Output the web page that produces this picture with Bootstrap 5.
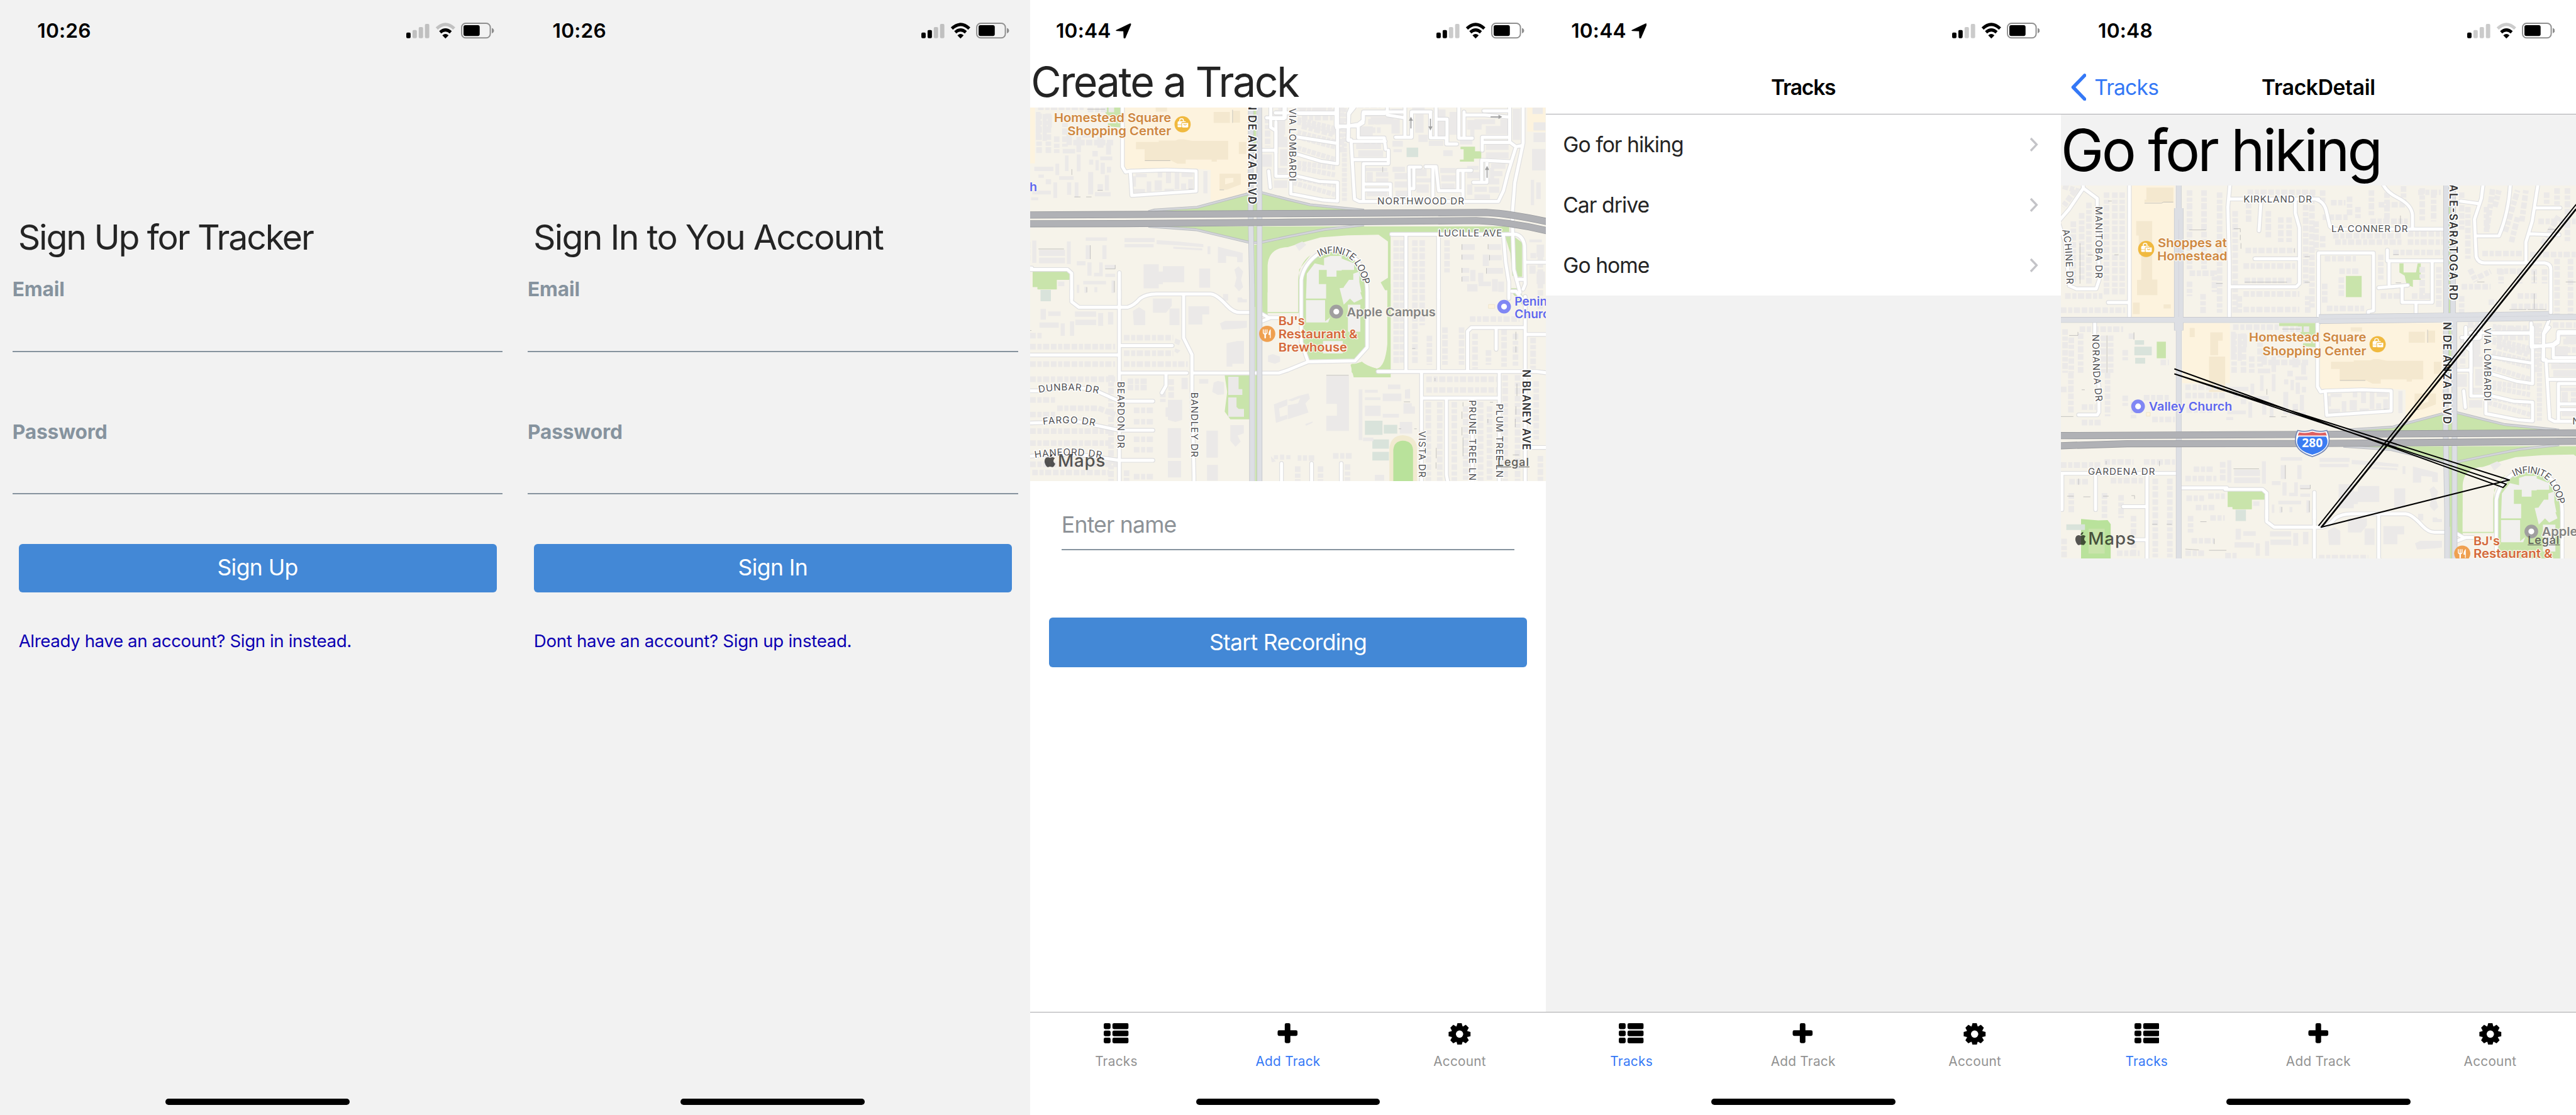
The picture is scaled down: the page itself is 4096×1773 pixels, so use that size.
<!DOCTYPE html>
<html lang="en">
<head>
<meta charset="utf-8">
<title>Tracker</title>
<link href="https://cdn.jsdelivr.net/npm/bootstrap@5.3.0/dist/css/bootstrap.min.css" rel="stylesheet">
<style>
html,body{margin:0;background:#f2f2f2;overflow:hidden}
.board{width:4140px;height:1792px;zoom:.98937;font-family:Inter,"Liberation Sans",sans-serif;color:#242424}
.phone{width:828px;height:1792px;background:#f2f2f2;overflow:hidden;flex:none}
.phone.plain{background:#fff}
.statusbar{height:99px;padding:0 34px 0 60px;flex:none}
.statusbar.loc{padding-left:41px}
.clock{font-size:32px;font-weight:600;line-height:40px;letter-spacing:.007em;color:#000}
.statusbar .arrow{margin-left:8px;width:25px;height:25px}
.signals{width:141px;height:26px}
.dim{fill:#000;opacity:.2}
.auth-title{font-size:56px;line-height:68px;font-weight:400;margin:248px 0 0 29px;letter-spacing:-.038em}
.auth-title.in{letter-spacing:-.031em}
.field{margin:30px 20px 0}
.field+.field{margin-top:108px}
.field label{display:block;font-size:32px;line-height:40px;font-weight:700;color:#86939e;height:40px;letter-spacing:-.004em}
.field input,.name-in{background:transparent;border:0;border-bottom:2.100px solid #86939e;border-radius:0;padding:0}
.field input{height:81px}
.cta{background:#4388d6!important;border:0;border-radius:6px;color:#fff!important;font-size:36px;line-height:44px;height:78px;margin:0 30px;letter-spacing:-.021em;font-weight:400}
.auth-cta{margin-top:79px;letter-spacing:-.017em}
.swap{font-size:28px;line-height:40px;margin:59px 30px 0 30px;color:#0c00b2;text-decoration:none;letter-spacing:-.0145em}
.swap.in{letter-spacing:-.0115em}
.pill{width:296px;height:10px;border-radius:5px;background:#000}
.auth-pill{margin-bottom:16px}
.create{font-size:67px;line-height:66px;height:74px;letter-spacing:-.036em;font-weight:400;margin:0;padding-left:1px}
.mapbox{height:600px;width:828px;flex:none;overflow:hidden}
.mapbox svg.tiles{width:828px;height:600px;display:block}
.brand{left:21px;top:552px;color:#000;opacity:.65;font-size:28px;line-height:32px;font-weight:500;letter-spacing:.03em}
.brand svg{width:21px;height:25px;margin-right:2px;margin-top:-1px}
.legal{right:26px;top:558px;font-size:18px;line-height:24px;font-weight:500;letter-spacing:.054em;color:#5d5d58;text-decoration:underline}
.name-in{height:78px;margin:33px 50px 0;width:728px;font-size:36px;letter-spacing:-.023em}
.name-in::placeholder{color:#8d9297;opacity:1}
.rec{margin-top:109px;height:79px}
.topbar{height:85px;background:#fff;border-bottom:1.100px solid #a9a9ad;font-size:34px;line-height:42px;flex:none;padding-bottom:2px}
.topbar h2{font-size:34px;font-weight:600;margin:0;line-height:42px;color:#000;letter-spacing:-.037em}
.topbar h2.det{letter-spacing:-.0107em}
.topbar .side{width:300px;padding-left:15px;color:#3478f6;letter-spacing:-.0235em}
.side svg{width:26px;height:44px;margin-right:13px}
.rows .list-group-item{height:97px;border:0;padding:0 36px 0 28px;font-size:34px;color:#242424;letter-spacing:-.028em;background:#fff}
.rows svg{width:14px;height:24px}
.detail-title{font-size:93px;line-height:112px;height:114px;letter-spacing:-.0405em;font-weight:400;color:#000;margin:0;padding-top:2px;flex:none}
.tabs{height:166px;border-top:1.100px solid #a7a7aa;background:#fff;padding-top:16px;flex:none;color:#929292}
.tabs .nav-link{padding:0;width:276px;font-size:21px;line-height:26px;letter-spacing:.013em;color:#929292}
.tabs .nav-link.active{color:#3478f6}
.tabs .nav-link svg{width:40px;height:36px;margin-bottom:14px;fill:#000;color:#000}
.tabs .pill{margin-top:47px}
/* map drawing */
.st{font-family:Inter,sans-serif;font-size:46px;fill:#505052;stroke:#fff;stroke-width:9;paint-order:stroke;stroke-linejoin:round}
.av{font-family:Inter,sans-serif;font-size:51px;font-weight:600;fill:#333;stroke:#fff;stroke-width:10;paint-order:stroke;stroke-linejoin:round}
.poi{font-family:Inter,sans-serif;font-size:58px;font-weight:600;stroke:#fbf8f0;stroke-width:7;paint-order:stroke;stroke-linejoin:round}
.bl{fill:#ebe9e8}.bc{fill:#f4e8cf}.gr{fill:#c9e4ab}.ten{fill:#d9e3db}.com{fill:#fdf3de}.cream{fill:#f6f3ea}
.hr{fill:none;stroke:#ebe9e8;stroke-width:27;stroke-dasharray:27 8 20 7 30 8}
.hs{fill:none;stroke:#ebe9e8;stroke-width:24;stroke-dasharray:17 5 21 5}
.sh{fill:none;stroke:#aaa;stroke-width:2}
.ar{fill:none;stroke:#a0a0a0;stroke-width:5}
</style>
</head>
<body>
<svg width="0" height="0" class="position-absolute">
<defs>
<symbol id="i-bat" viewBox="0 0 54 26"><rect x="1" y="1" width="46" height="23.500" rx="6.500" fill="none" stroke="#8e8e8e" stroke-width="2"/><rect x="4" y="4" width="26" height="17.500" rx="3"/><path d="M49.500 8.500q3.500 1.500 3.500 4.300t-3.500 4.300z" fill="#8e8e8e"/></symbol>
<symbol id="i-arrow" viewBox="0 0 24 24"><path d="M1.200 10.200 21.500.6q3-1 2.200 1.800L15 22.800q-1.700 2.400-2.800-.4L11.800 12.400 1.800 12Q-1.200 11.200 1.200 10.200z"/></symbol>
<symbol id="i-list" viewBox="0 0 40 36"><rect x="0" y="1" width="11" height="9.500" rx="2.500"/><rect x="14" y="1" width="26" height="9.500" rx="2.500"/><rect x="0" y="12.800" width="11" height="9.200" rx="2.500"/><rect x="14" y="12.800" width="26" height="9.200" rx="2.500"/><rect x="0" y="24.200" width="11" height="9.200" rx="2.500"/><rect x="14" y="24.200" width="26" height="9.200" rx="2.500"/></symbol>
<symbol id="i-plus" viewBox="0 0 40 36"><rect x="15" y="1" width="9" height="32" rx="2.500"/><rect x="3.500" y="12.500" width="32" height="9" rx="2.500"/></symbol>
<symbol id="i-gear" viewBox="0 0 40 36"><g transform="translate(20 18.500)"><circle r="9.700" fill="none" stroke="#000" stroke-width="7.600"/><g id="tooth2"><path id="tooth" d="M-4.800-12.500-3.400-17.600H3.400L4.800-12.500z"/><use href="#tooth" transform="rotate(45)"/><use href="#tooth" transform="rotate(90)"/><use href="#tooth" transform="rotate(135)"/></g><use href="#tooth2" transform="rotate(180)"/></g></symbol>
<symbol id="i-chev" viewBox="0 0 14 24"><path d="M2 2 11.500 12 2 22" fill="none" stroke="#c4c4c8" stroke-width="3.400"/></symbol>
<symbol id="i-apple" viewBox="0 0 16 16"><path d="M11.182.008C11.148-.03 9.923.023 8.857 1.18c-1.066 1.156-.902 2.482-.878 2.516s1.52.087 2.475-1.258.762-2.391.728-2.43m3.314 11.733c-.048-.096-2.325-1.234-2.113-3.422s1.675-2.789 1.698-2.854-.597-.79-1.254-1.157a3.7 3.7 0 0 0-1.563-.434c-.108-.003-.483-.095-1.254.116-.508.139-1.653.589-1.968.607-.316.018-1.256-.522-2.267-.665-.647-.125-1.333.131-1.824.328-.49.196-1.422.754-2.074 2.237-.652 1.482-.311 3.83-.067 4.56s.625 1.924 1.273 2.796c.576.984 1.34 1.667 1.659 1.899s1.219.386 1.843.067c.502-.308 1.408-.485 1.766-.472.357.013 1.061.154 1.782.539.571.197 1.111.115 1.652-.105.541-.221 1.324-1.059 2.238-2.758q.52-1.185.473-1.282"/></symbol>
<g id="bag"><circle r="39" fill="#f0b93f"/><path d="M-14-15v-4q0-8 9-8t9 8v4" fill="none" stroke="#fff" stroke-width="4.500"/><path d="M-24-9q0-6 6-6H10q6 0 6 4H0q-6 0-6 6v7H-24zM-24 4H-6V14H-20q-4 0-4-4z" fill="#fff"/><path d="M-3-7H27V11q0 4-4 4H1q-4 0-4-4z" fill="#fff"/><path d="M5-1q7 9 14 0" fill="none" stroke="#f0b93f" stroke-width="4"/></g>

<!-- local streets; drawn twice, casing below and fill above -->
<g id="streets" fill="none" stroke-linejoin="round" stroke-linecap="round">
<g transform="translate(0 -39)"><path d="M445 10V325L460 350 480 346 660 340 800 345V442L490 463 483 350M1160 39V135L1185 150V370H1242M1110 245H1185M1150 345 1158 425M1160 92H1224V39M0 820H180L200 838V960M430 835V960"/></g>
<g transform="translate(1242 -39)"><path d="M-60 65H235M240 39V310L160 298 40 262M40 180 240 212M45 370 150 395 240 400V490L170 485 15 455V380M235 135 290 128 340 120 365 100V60H560M320 39 295 70 290 195H305L322 480 345 492H1015L1040 440 1060 360 1100 230M1070 39V205L1100 228 1130 222M1135 39V210L1095 400 1082 560 1085 650 1090 820 1120 930M340 125V185H465L472 240M310 202H470M485 245V310H365V490M320 290H485M365 408H495V480M370 436H495M480 39V75L560 88M565 39V182M597 60V182H520M600 60H690M688 60V185H765V215H815M715 39V185M715 95H768V215M825 39V187H890M850 60V187M850 75H950L1070 85M945 55H1070M938 245V182H1070M940 207H1070M640 326H585L588 480M608 330V430H590M665 324H715L728 440H845V480M700 330V480M885 342H820V440M845 342V440M895 400H960V300M935 295V400M935 293 1070 300M500 650H1100Q1135 660 1142 705L1145 890 1135 915M570 650V960M727 650V960M1040 655 1050 780 1066 880V960M1145 785H1260M1110 868H1145"/></g>
<g transform="translate(0 891)"><path d="M200-10V45L235 72H470Q500 65 530 30 560 8 610 8H870Q900 10 950 65 980 97 1010 97H1060M430-10V930M740 8V220L780 300V470L790 890V930M0 302H430M430 257H685M430 389H755M655 389V450L635 485M785 389H1200L1242 375M0 475H40Q230 440 330 480L430 525H592M0 630 60 628Q220 610 310 640L430 665H592M0 790Q200 770 340 797L430 810H592M1212 825V930M1115 103 1150 122H1200M1115 140 1160 122"/></g>
<g transform="translate(1242 891)"><path d="M0 375 98 335 65 240V-60Q75-130 140-180 240-240 335-155 383-90 383 0V265L325 330 98 335M435 382H1200L1260 390M570 0V382M727 0V382M867 382V188L885 170H1145M1005 175V275M1145 20V930M1080-5H1100L1145 50M1150 203H1260M645 382V930M645 510H1020M1020 382V930M765 515V880L775 930M890 515V930M1150 748H1260M115 825V930M258 825V930"/></g>
<g transform="translate(-792 -711)"><path d="M105 0 108 40 40 140-20 210M108 40 175 90V130L185 480 170 525H75L40 510 20 300-10 210M330 0V662M228 591H330M817 0 805 130 812 400V662M815 92H1242M965 100 955 245M1130 95V160L1150 230V500L1135 515H812M935 380H1150M163 690V930"/></g>
<g transform="translate(450 -711)"><path d="M-10 95Q30 105 40 160L55 225Q70 240 100 237H610M310 20Q330 60 380 85 450 120 453 170V237M0 690V352H265V630L240 635V650M332 338V390H610M340 390V505M290 520 430 508M403 515V590H548V390M470 595V650M795 10 785 90 752 190 760 370Q770 400 800 400H1090Q1120 405 1120 430V640M685 102 775 115M925 10Q920 150 870 270H755M1060 10 1030 200 1000 300V395M1045 135H1165M1015 260 1160 265M1025 690V800M845 740H1020M780 690V760H690M735 780V930M1110 680 1085 740V870M1025 800H1130L1155 785V740H1260"/></g>
<g transform="translate(-792 219)"><path d="M163-10 183 60V190L175 203H85M0 485H560M5 485V660M167 490V660M415 485V930M300 645H415M350 805H415M580 555H800"/></g>
</g>

<g id="ramps" fill="none" stroke-linejoin="round"><path transform="translate(0 -39)" d="M570 541 600 533 805 520 1050 455M1110 448 1242 482 1350 508 1610 534M570 612 800 628 1060 690H1110L1242 662 1420 627 1610 605"/></g>
<g id="avenues" fill="none" stroke-linejoin="round">
<path d="M1065-711V-40M1098-711V-40" stroke-width="22"/>
<path d="M1065-50 1063 500 1070 891V1830M1104-50 1106 500V1830" stroke-width="22"/>
<path d="M-792-36H450M1550-50H1800" stroke-width="24"/><path d="M452-40 1092-48 1560-55" stroke-width="42"/>
<path d="M-224-711V-560M-224 0V1830" stroke-width="24"/><path d="M-224-575V15" stroke-width="41"/>
</g>
<g id="freeway" fill="none" stroke-linejoin="round">
<path d="M-800 522 450 516 1242 511 2200 506Q2320 512 2500 552"/>
<path d="M-800 571-472 561 450 560 1242 553 2150 545Q2320 552 2500 596"/>
</g>

<g id="city">
<rect x="-800" y="-720" width="3300" height="2560" class="cream"/>
<!-- commercial blocks -->
<path class="com" d="M455 0H1050V416L870 451V301L800 296H455ZM2397 0h87v116h-87zM-452-684h208v635h-208zM-207-21H23V269H-207zM455-21h595v40h-595zM0 0h22v265H0z"/>
<!-- parks -->
<path class="gr" transform="translate(0 -39)" d="M365 39H445V75L375 62zM375 115H440V135L375 130zM570 538 805 520 1050 455H1115L1242 485 1350 510 1610 535zM570 612H2310V650H1738V940H1118V690H1050L800 628zM12 828H190V870H128V915H35V905H12zM2075 228H2145V250H2175V285H2140V300H2072V290H2090V240H2075zM2290 660 2325 655 2372 690V855H2345L2325 850 2315 740zM1080 700h16v300h-16z"/>
<path class="gr" transform="translate(0 891)" d="M1118-40H1738V410H1560L1545 350 1600 300 1120 100zM1085 0h12v930h-12zM938 400H1058V612H965L938 575 950 480zM2305-20h45l40 60v40z"/>
<path class="cream" transform="translate(0 -39)" d="M1145 860V800Q1150 715 1242 712L1330 685 1400 665 1530 655 1680 652 1725 685V860L1690 882 1720 935V1050L1330 1050 1145 1025V890z"/>
<path class="cream" transform="translate(1242 891)" d="M-97 0H400V-10H480V250Q470 360 430 368 380 355 358 335L330 345 98 345 0 380-120 390V110H-97z"/>
<path class="gr" transform="translate(1242 891)" d="M-97 95H50V-60Q55-140 110-180L55-110V100H-97zM98 325 70 240V-60Q80-130 140-175 240-235 325-150 376-90 376 0V265L325 322z"/>
<path class="gr" transform="translate(1242 891)" d="M358 335Q370 355 430 368 470 365 484 250V-10H496V410H330L308 385V350z"/>
<path class="gr" transform="translate(450 -711)" d="M132 463h76v102h-76zM390 402h20v44h60l8-44h15v80h-38v34l-30-10-10-45-25-15zM-190 690H-15V740L-30 790-85 740-100 705H-190zM628 110h12v540h-12zM625 700h14v230h-14z"/>
<path class="gr" transform="translate(-792 -711)" d="M462 780h44v80h-44z"/>
<path fill="#b9e29b" transform="translate(-792 219)" d="M97 705 180 712 225 710 240 730V930H97z"/>
<path class="gr" transform="translate(-792 219)" d="M133 752h78v120h-78z"/>
<path class="gr" transform="translate(-792 219)" d="M806 570H985V610H920V658H830V645H806z"/>
<path fill="#f1ead0" d="M1732 1840V1640Q1740 1582 1797 1580 1860 1585 1865 1640V1840z"/><path fill="#b9e29b" d="M1751 1840V1650Q1755 1608 1797 1606 1843 1608 1846 1650V1840z"/>
<!-- courts -->
<path class="ten" d="M50 879h50v55H50zM1815 193h56v46h-56zM1614 1510h85v68h-85zM1705 1530h65v42h-65zM1650 1600h80v45h-80zM1650 1660h80v42h-80zM-436 62h45v22h-45zM-438 93h84v42h-84zM-434 147h48v28h-48zM-766 950h90v27h-90z"/>
<path fill="#fdf3de" stroke="#e9dfc0" stroke-width="2" d="M2210 950h30v18h-30zM-380 410h18v18h-18z"/>
<!-- shops -->
<path class="bc" transform="translate(0 -39)" d="M510 205H620V198H700L715 192H740L780 200H955V290H900V300H875V290H750V310H710L680 295H552V240H510ZM885 60h78v53h-78zM978 55h34v57h-34zM1006 205h36v58h-36zM913 358H1016V410L950 435H913V358M940 380V410L980 398V378zM605 39h55v20h-55z" fill-rule="evenodd"/>
<path class="bc" transform="translate(-792 -711)" d="M412 37H542V107H403V95H412zM363 198H440V480H465V555H367V482H387V360H375V268H363zM347 592h33v55h-33zM495 600h35v20h-35zM621 714h24v44h-24zM720 735h60v40h-22v70h-38zM714 852h78v170h-78z"/>
<!-- larger buildings -->
<path class="bl" transform="translate(0 -39)" d="M547 795h73v35h20v-26h103v77h-103v10h-20v20h-73zM815 815h53v93h-53zM905 710 1025 740V785H998V760L945 755V788H905zM985 820l20-15 22 25-10 40 10 35-20 20-22-25 10-40zM455 668h145v20H455zM610 678l110 8 115 12v14l-115-8-110-6zM455 697h140v16H455zM690 710l140 8v10l-140-8zM835 345h20v108h-20zM855 708h14v38h-14zM43 725H168V755H43zM43 763H168V790H43zM10 680h20v108H10zM177 685h19v108h-19zM268 665h103v17H268zM268 703h22v67h-22zM348 703h20v67h-20zM225 780h42v20h-42zM276 786h20v64h-20zM333 786h17v64h-17zM360 798h50v18h-50zM308 836h42v17h-42zM362 840h48v16h-48zM135 878h30v22h-30zM256 875h110v17H256zM225 893h12v40h-12zM262 903h12v30h-12zM310 905h14v25h-14zM392 873h15v60h-15zM28 60h22v135H28zM60 70h20v130H60zM85 75h20v60H85zM175 150h26v70h-26zM157 238h60v22h-60zM223 180h22v74h-22zM168 270h17v75h-17zM225 265h18v82h-18zM122 310h18v55h-18zM20 325h92v20H20zM250 160h42v24h-42zM300 248h26v27h-26zM324 182h30v50h-30zM366 210h24v56h-24zM284 290h20v24h-20zM315 292h16v50h-16zM338 275h58v18h-58zM340 305h20v55h-20zM370 325h20v28h-20zM112 400h18v75h-18zM140 370h70v18h-70zM178 400h20v60h-20zM215 400h18v72h-18zM280 350h24v108h-24zM325 408h26v32h-26zM360 365h20v75h-20zM312 447h76v20h-76zM10 440h90v18H10zM5 472h34v14H5zM75 385h26v24H75zM40 362h26v16H40z"/>
<path class="bl" transform="translate(0 -39)" d="M498 432h56v26h-56zM508 358h54v17h-54zM562 395h22v50h-22zM615 350h22v26h-22zM600 390h35v50h-35zM655 350h24v54h-24zM648 430h45v16h-45zM697 348h22v85h-22zM730 352h55v22h-55zM762 385h24v48h-24zM490 370h20v50h-20zM728 405h24v28h-24zM1180 50h50v30h-50zM1190 100h40v70h-40zM1195 180h45v50h-45zM1120 265h45v60h-45zM1205 240h35v80h-35zM1178 330h60v25h-60zM1175 390h65v36h-65z"/>
<path class="bl" transform="translate(1242 -39)" d="M350 130h60v45h-60zM400 85h110v35H400zM500 45h50v30h-50zM500 95h40v70h-40zM615 70h40v90h-40zM630 170h45v35h-45zM723 48h38v40h-38zM723 105h38v72h-38zM780 60h40v110h-40zM865 100h70v45h-70zM900 95h100v24H900zM1025 95h38v70h-38zM880 125h20v60h-20zM955 128h105v40H955zM830 195h60v22h-60zM680 200h70v24h-70zM330 215h120v24H330zM340 245h120v32H340zM505 200h50v28h-50zM510 240h40v14h-40zM370 330h110v16H370zM380 350h30v50h-30zM425 350h60v22h-60zM425 380h60v20h-60zM505 325h60v24h-60zM515 355h60v30h-60zM515 395h60v30h-60zM520 440h60v30h-60zM620 335h50v35h-50zM620 380h70v20h-70zM620 410h60v40h-60zM735 330h75v25h-75zM740 365h70v30h-70zM740 405h65v30h-65zM865 350h60v30h-60zM865 320h55v20h-55zM865 410h25v50h-25zM900 420h60v25h-60zM980 310h70v25h-70zM975 345h60v25h-60zM970 380h50v30h-50zM970 420h50v30h-50zM900 458h75v22h-75zM380 445h100v22H380zM955 215h110v28H955zM955 255h110v30H955zM990 75h70v10h-70zM1085 45h36v150h-36zM975 330h20v60h-20zM370 70h100v14H370zM600 39h60v12h-60zM750 245h45v28h-45zM1180 40h50v30h-50zM1185 110h57v40h-57zM1185 160h57v46h-57zM1178 238h64v104h-64zM1172 388h16v122h-16zM1198 400h22v80h-22z"/>
<path class="bl" transform="translate(1242 -39)" d="M840 698h62v28h-62zM968 698h60v28h-60zM840 747h58v26h-58zM972 750h60v26h-60zM940 748h30v55h-30zM958 812h80v28h-80zM840 812h35v24h-35zM880 822h25v55h-25zM918 836h25v42h-25zM840 852h34v26h-34zM920 878h60v22h-60zM985 866h28v60h-28zM865 890h50v36h-50zM1015 878h28v50h-28zM1165 675h60v14h-60zM1200 700h36v60h-36zM1165 800h30v40h-30zM1200 830h40v60h-40zM35 700l35-15 20 15-35 30zM1170 740h28v26h-28z"/>
<path class="bl" transform="translate(0 891)" d="M592 30H683V65L655 98H592zM495 90 525 72 555 90V158H500zM672 78h48v80h-48zM763 67h100v40h-33v48h-67zM915 150 940 138H1045V170L1010 175 925 180zM947 245 1000 235H1031V345H975V358H947zM1147 305 1170 298 1205 310V335L1180 345 1147 335zM885 435 905 427 935 433V492L905 495 878 480zM815 418h44v22h-44zM664 518H733V615L700 625 664 615V600H653V555H664zM663 655H727V798H663zM850 667H905V797H850zM853 832H905V908H853zM664 813H728V893H664zM965 640H1030V680L1000 690 1015 720 990 745 965 715zM955 407h50v60h18v28h-68zM955 507h40v45l10 10h26v38h-76zM1175 540 1240 515V545L1200 560 1205 600 1240 590V610L1185 630zM930 8h25v32h-25zM1000 25h20l5 8h20v15h-45zM87 92h60v22H87zM50 80h26v52H50zM45 145h93v26H45zM147 150h20v60h-20zM216 92h102v26H216zM218 132h100v26H218zM328 100h24v62h-24zM375 95h26v60h-26zM192 140h20v70h-20zM700 222 725 232 718 255 695 245zM700 270 725 280 710 295 695 285zM730 412h30v55h-30zM1160 790l25 25-20 5zM1175 785h20v20h-20zM1205 782h20v25h-20zM1235 785h20v20h-20z"/>
<path class="bl" transform="translate(1242 891)" d="M186 402H295V668H186V595H237V538H186zM0 545 50 535 60 510 20 525 0 520 50 500 100 487 107 512 85 535 100 580 0 612zM342 468h18v244h-18zM372 470h62v14h-62zM372 506h75v14h-75zM483 445h60v22h-60zM458 488h90v36h-90zM372 546h76v50h-76zM458 586h78v18h-78zM565 470l25-5V512H565zM558 535h40v15h15v35h-55zM540 625h60v56h-60zM363 700h50v18h-50zM420 880h45v28h-45zM85 635l35-12v6l-32 14z"/>
<!-- campus buildings -->
<path fill="#f1f0ee" transform="translate(1242 -39)" d="M175 765 205 755H260V825H235V855H188V822H175zM255 765 320 790V822H255zM92 840 130 790 175 800V822H150V890H185V960H88zM316 840 345 830V880L355 930H270V905L295 870H316z"/>
<path fill="#f1f0ee" transform="translate(1242 891)" d="M88 38H180V140L205 120 195 145H88zM290 60H350V190H290zM250-20 340-30 360 30 320 50 300 30 270 60zM170 235h95v60h-95z"/>
<!-- house rows -->
<path class="hs" d="M1290 57 1472 102M1290 120 1470 165M1290 142 1470 190M1290 195 1470 250M1290 268 1470 290M1290 290 1470 325M1270 335 1470 375M1270 363 1470 420M1290 -5 1470 20M1290 70 1470 120M1515-20V450M1490-20V80"/>
<path class="hr" d="M1765 640V1240M1855 640V1240M1925 1100V1240M2010 640V800M2000 1060V1240M2080 1060V1240M2145 1090V1260M2210 1170V1240M2285 1070V1250M2340 1090V1250M2425 1110V1260M2460 680V1000M2440 1320V1600M2460 1680V1800M1910 1310H2250M1910 1362H2250M1920 1420V1800M1975 1420V1800M2045 1420V1800M2100 1440V1800M2172 1420V1800M2215 1440V1800M2290 1290V1800M2350 1290V1800M1890 640V1050M1795 640V1230M2120 1020H2360M1370 1690H1290M1290 1730V1800M1400 1730V1800M1530 1720V1800M1460 1680H1550"/>
<path class="hr" d="M452 1110H690M452 1185H690M452 1237H760M470 1320H570M470 1350H570M500 1460H600M500 1515H600M500 1600H600M500 1650H600M465 1750V1800M500 1780H600M0 1153H410M0 1237H410M130 1310H410M0 1310H120M0 1410H120M130 1450H330L410 1480M0 1480H120M0 1560H400M0 1618H390M0 1720H420M10 1760H380M640 1370V1420M680 1310V1400M0 1100H60M390 1290V1800"/>
<path class="hr" transform="translate(-792 -711)" d="M10 30 70 50 10 130M60 200V500M135 110V500M100 160V480M220 60V560M260 60V560M295 60V560M20 560H200M0 628H310M620 50V430M690 50V430M765 60V640M620 450H740V540M620 490V560M685 550V650M840 150V640M900 60H1230M905 110V210M1000 150V280M1060 180V300M1100 180V300M1180 120V500M1210 60V620M890 340H1130M880 415H1130M885 485H1120M880 550H1150M880 625H1150M1190 640V560M1230 200V340M860 560V640M90 720H300M20 720V930M50 760V930M95 740V930M205 750V930M240 750V930M310 820V870M340 740V770M480 880H520M830 710H1050M835 740V930M880 740V930M920 850V930M960 750V900M1070 720H1200M1000 880H1200"/>
<path class="hr" transform="translate(450 -711)" d="M20 50V120M60 110H130M150 80V170M190 130V190M20 180H140M255 50V170M290 120H420M330 60V200M410 30V100M480 60H590M500 40V200M555 60V200M250 200H430M70 270H400M20 270V330M80 300H400M430 260H600M430 300H600M30 380H180M100 440H200M110 470V560M30 500V600M40 620H220M300 360V480M360 350H600M300 560H400M580 420V620M500 420V580M450 560H540M690 60V240M720 130V380M810 130V250L840 40M850 130 870 50M900 250 960 50M980 200 1000 50M930 300 960 180M1060 200H1240M1100 60V120M1150 40V120M1200 40V300M790 355H980M1020 360H1240M1080 310 1160 170M730 430 760 490M770 470 830 440M880 430V500M860 440H1000M970 430V500M1040 430V500M1090 430V500M690 515H830M930 610H1100M960 560H1060M820 590H860M690 560V640M1150 380V660M1215 380V660M850 715H1010M860 760H1010M1050 700V930M720 700H770M760 700V900M695 760V900M860 800 1010 840M1130 700H1240M1180 780H1240M1160 820H1240M1160 890H1240"/>
<path class="hr" transform="translate(-792 219)" d="M0 80H60M48 0V200M100 165H170M100 240H200M225 0V210M310 110V160M350 140V220M400 120H520M440 225H550M600 70H780M600 110H790M605 180H740M0 445H190M210 430H350M400 430H550M40 525H130M240 520H400M50 580V680M210 580V700M290 590V700M350 690V890M455 510V890M525 510V890M640 465H740M600 510H750M780 430V520M605 605H690M710 595H790M650 650H740M625 690V770M720 700H790M630 810H740M600 870H690M270 870H380M15 800V890"/>
<path class="sh" transform="translate(0 -39)" d="M553 295H676M325 438H350M275 47H362M290 703V770M410 798V817H362M913 436H935M765 433H787M273 905V930M406 875V930M2082 698V725M2082 748V772M2082 812V836M2082 855V878M2208 698V722M2215 750V776M2200 813V840M1700 325V350"/>
<path class="sh" transform="translate(1242 891)" d="M186 400H294M535 658H547M610 658H622M600 271H615M710 413V428M845 530V550M840 575V610M840 650V690M716 750V800M975 530H990M965 610V630M1105 440V500M1100 550V590M1097 610V650M1085 784H1115M845 700V790M715 820V850M1100 190V230M1100 260V290M560 528H590"/>
<path class="sh" transform="translate(-792 -711)" d="M403 112H485L495 107H542M618 241H700M228 102H245M833 235H865V252M865 265V290M868 305V332M886 493H1090M1125 330V350M92 305V500M40 750H82V733M352 735V770M222 750V930M748 499H780M130 362H155M258 361H278M1175 370H1200M1175 493H1200"/>
<path class="sh" transform="translate(-792 219)" d="M832 463H955M0 211H60M993 78V106M1005 212H1035M1062 212H1088M600 850 665 854M714 856H798M739 800V826M672 718H702M30 595H62M108 598H142M203 595H230M340 592H355V608M440 730H465M510 730H535M100 82H115M85 510V540M218 425V442M475 425V450"/>
<path class="sh" transform="translate(450 -711)" d="M526 722V785M1040 440V495M920 625H1002M1008 625H1098M1040 548V622M395 172V212M360 360H387M372 496H398M765 492H800M1105 238H1145M1192 492H1240"/>
<!-- roads -->
<use href="#streets" stroke="#dededf" stroke-width="22"/>
<use href="#streets" stroke="#fff" stroke-width="15"/>
<use href="#ramps" stroke="#b9bbbf" stroke-width="13"/><use href="#ramps" stroke="#d3d5d9" stroke-width="8"/>
<g stroke="#c3c5ca" fill="none"><path d="M1065-711V-60M1098-711V-60M1065-50 1063 500 1070 891V1830M1104-50 1106 500V1830M-224-711V-560M-224 0V1830" stroke-width="27"/><path d="M-792-36H450M1550-50H1800" stroke-width="28"/><path d="M452-40 1092-48 1560-55" stroke-width="46"/><path d="M-224-575V15" stroke-width="45"/></g>
<use href="#avenues" stroke="#dddfe4"/>
<path d="M460-40 1092-48 1560-55M-224-520V-50" stroke="#cfd1d7" stroke-width="2" fill="none"/>
<use href="#freeway" stroke="#97999d" stroke-width="34"/><use href="#freeway" stroke="#b0b1b5" stroke-width="29"/>
<g class="ar" transform="translate(1242 -39)"><path d="M594 140V95M688 93V140M978 84H1020M961 378V330M1018 84"/><path fill="#a0a0a0" stroke="none" d="M584 103 594 84 604 103zM678 130 688 150 698 130zM1016 74 1034 84 1016 94zM951 340 961 320 971 340z"/></g>

<!-- street names -->
<path id="p-loop" d="M1394 720C1450 688 1530 702 1568 756 1594 796 1608 842 1613 892" fill="none"/>
<path id="p-dun" d="M42 1375Q190 1350 330 1380" fill="none"/><path id="p-far" d="M63 1530Q190 1512 314 1536" fill="none"/><path id="p-han" d="M23 1690Q190 1664 347 1692" fill="none"/>
<path id="p-lac" d="M-786-470Q-768-400-765-206" fill="none"/><path id="p-nor" d="M-641 34-638 200-624 358" fill="none"/>
<g class="st">
<text x="1674" y="468" textLength="418">NORTHWOOD DR</text><text x="1967" y="621" textLength="308">LUCILLE AVE</text>
<text textLength="300"><textPath href="#p-loop">INFINITE LOOP</textPath></text>
<text textLength="288"><textPath href="#p-dun">DUNBAR DR</textPath></text><text textLength="250"><textPath href="#p-far">FARGO DR</textPath></text><text textLength="322"><textPath href="#p-han">HANFORD DR</textPath></text>
<text transform="translate(420 1321) rotate(90)" textLength="322">BEARDON DR</text><text transform="translate(775 1373) rotate(90)" textLength="313">BANDLEY DR</text>
<text transform="translate(1873 1559) rotate(90)" textLength="225">VISTA DR</text><text transform="translate(2118 1411) rotate(90)" textLength="388">PRUNE TREE LN</text><text transform="translate(2248 1428) rotate(90)" textLength="356">PLUM TREE LN</text>
<text transform="translate(1250 3) rotate(90)" textLength="352">VIA LOMBARDI</text>
<text x="88" y="-603" textLength="330">KIRKLAND DR</text><text transform="translate(-625 -583) rotate(90)" textLength="347">MANITOBA DR</text>
<text textLength="264"><textPath href="#p-lac">ACHINE DR</textPath></text><text textLength="325"><textPath href="#p-nor">NORANDA DR</textPath></text>
<text x="512" y="-459" textLength="368">LA CONNER DR</text><text x="-662" y="712" textLength="323">GARDENA DR</text>
</g>
<g class="av"><text transform="translate(1051 -26) rotate(90)" textLength="492">N DE ANZA BLVD</text><text transform="translate(1083 -690) rotate(90)" textLength="559">ALE-SARATOGA RD</text><text transform="translate(2374 1263) rotate(90)" textLength="388">N BLANEY AVE</text></g>
<!-- places -->
<g class="poi" fill="#cf873f">
<text x="115" y="69" textLength="565" lengthAdjust="spacingAndGlyphs">Homestead Square</text><text x="180" y="134" textLength="500" lengthAdjust="spacingAndGlyphs">Shopping Center</text>
<text x="-325" y="-387" textLength="333" lengthAdjust="spacingAndGlyphs">Shoppes at</text><text x="-327" y="-324" textLength="337" lengthAdjust="spacingAndGlyphs">Homestead</text>
</g>
<use href="#bag" x="735" y="81"/><use href="#bag" x="-381" y="-378"/>
<g class="poi" fill="#5f68ee"><text x="-368" y="402" textLength="402" lengthAdjust="spacingAndGlyphs">Valley Church</text><text x="2336" y="954">Peninsula</text><text x="2336" y="1017">Church</text></g>
<g fill="#fff" stroke-width="19"><circle cx="-420" cy="381" r="23.500" stroke="#8087f4"/><circle cx="2285" cy="960" r="23.500" stroke="#8087f4"/><circle cx="1476" cy="984" r="23.500" stroke="#a09f9f"/></g>
<g class="poi" fill="#828282"><text x="1527" y="1006" textLength="428" lengthAdjust="spacingAndGlyphs">Apple Campus</text></g>
<g class="poi" fill="#d4683a"><text x="1197" y="1049" textLength="127" lengthAdjust="spacingAndGlyphs">BJ's</text><text x="1197" y="1112" textLength="381" lengthAdjust="spacingAndGlyphs">Restaurant &amp;</text><text x="1197" y="1177" textLength="331" lengthAdjust="spacingAndGlyphs">Brewhouse</text></g>
<g transform="translate(1143 1091)"><circle r="39" fill="#efa050"/><path fill="none" stroke="#fff" stroke-width="4.500" stroke-linecap="round" d="M-19-20V-6Q-18 1-10 1T-1-6V-20M-10-20V20"/><path d="M-10 0V19" stroke="#fff" stroke-width="7" stroke-linecap="round"/><path fill="#fff" d="M17-22V19Q16 23 13 20V5H6Q7-16 17-22z"/></g>
</g>
</defs>
</svg>

<main class="board d-flex">

<section class="phone d-flex flex-column">
 <header class="statusbar d-flex align-items-center"><span class="clock">10:26</span>
  <svg class="signals ms-auto" viewBox="0 0 141 26"><rect y="16" width="7" height="9" rx="2"/><g class="dim"><rect x="10" y="12" width="7" height="13" rx="2"/><rect x="20" y="7" width="7" height="18" rx="2"/><rect x="30" y="2" width="7" height="23" rx="2"/></g><g fill="none" stroke="#000"><path d="M49 9.500Q63-3.500 77 9.500" stroke-width="5" opacity=".2"/><path d="M54.500 15.500Q63 8 71.500 15.500" stroke-width="5"/></g><path d="M58 20.500Q63 16 68 20.500L63 25.500z"/><use href="#i-bat" x="88" y="0" width="54" height="26"/></svg></header>
 <h1 class="auth-title">Sign Up for Tracker</h1>
 <div class="field"><label for="e1">Email</label><input id="e1" class="form-control shadow-none"></div>
 <div class="field"><label for="p1">Password</label><input id="p1" type="password" class="form-control shadow-none"></div>
 <button class="btn cta auth-cta">Sign Up</button>
 <a class="swap" href="#">Already have an account? Sign in instead.</a>
 <div class="pill auth-pill mx-auto mt-auto"></div>
</section>

<section class="phone d-flex flex-column">
 <header class="statusbar d-flex align-items-center"><span class="clock">10:26</span>
  <svg class="signals ms-auto" viewBox="0 0 141 26"><g id="bars2"><rect y="16" width="7" height="9" rx="2"/><rect x="10" y="12" width="7" height="13" rx="2"/><g class="dim"><rect x="20" y="7" width="7" height="18" rx="2"/><rect x="30" y="2" width="7" height="23" rx="2"/></g><g fill="none" stroke="#000" stroke-width="5"><path d="M49 9.500Q63-3.500 77 9.500"/><path d="M54.500 15.500Q63 8 71.500 15.500"/></g><path d="M58 20.500Q63 16 68 20.500L63 25.500z"/><use href="#i-bat" x="88" y="0" width="54" height="26"/></g></svg></header>
 <h1 class="auth-title in">Sign In to You Account</h1>
 <div class="field"><label for="e2">Email</label><input id="e2" class="form-control shadow-none"></div>
 <div class="field"><label for="p2">Password</label><input id="p2" type="password" class="form-control shadow-none"></div>
 <button class="btn cta auth-cta">Sign In</button>
 <a class="swap in" href="#">Dont have an account? Sign up instead.</a>
 <div class="pill auth-pill mx-auto mt-auto"></div>
</section>

<section class="phone plain d-flex flex-column">
 <header class="statusbar loc d-flex align-items-center"><span class="clock">10:44</span><svg class="arrow"><use href="#i-arrow"/></svg>
  <svg class="signals ms-auto" viewBox="0 0 141 26"><use href="#bars2"/></svg></header>
 <h1 class="create">Create a Track</h1>
 <div class="mapbox position-relative"><svg class="tiles" viewBox="0 0 2484 1800"><use href="#city"/></svg>
  <div class="brand position-absolute d-flex align-items-center"><svg><use href="#i-apple"/></svg>Maps</div><span class="legal position-absolute">Legal</span></div>
 <input class="name-in form-control shadow-none" placeholder="Enter name">
 <button class="btn cta rec">Start Recording</button>
 <footer class="tabs mt-auto"><nav class="nav"><a class="nav-link d-flex flex-column align-items-center"><svg><use href="#i-list"/></svg>Tracks</a><a class="nav-link active d-flex flex-column align-items-center"><svg><use href="#i-plus"/></svg>Add Track</a><a class="nav-link d-flex flex-column align-items-center"><svg><use href="#i-gear"/></svg>Account</a></nav><div class="pill mx-auto"></div></footer>
</section>

<section class="phone d-flex flex-column">
 <header class="statusbar loc bg-white d-flex align-items-center"><span class="clock">10:44</span><svg class="arrow"><use href="#i-arrow"/></svg>
  <svg class="signals ms-auto" viewBox="0 0 141 26"><use href="#bars2"/></svg></header>
 <div class="topbar d-flex align-items-center justify-content-center"><h2>Tracks</h2></div>
 <div class="rows list-group list-group-flush">
  <a class="list-group-item d-flex align-items-center justify-content-between">Go for hiking<svg><use href="#i-chev"/></svg></a>
  <a class="list-group-item d-flex align-items-center justify-content-between">Car drive<svg><use href="#i-chev"/></svg></a>
  <a class="list-group-item d-flex align-items-center justify-content-between">Go home<svg><use href="#i-chev"/></svg></a>
 </div>
 <footer class="tabs mt-auto"><nav class="nav"><a class="nav-link active d-flex flex-column align-items-center"><svg><use href="#i-list"/></svg>Tracks</a><a class="nav-link d-flex flex-column align-items-center"><svg><use href="#i-plus"/></svg>Add Track</a><a class="nav-link d-flex flex-column align-items-center"><svg><use href="#i-gear"/></svg>Account</a></nav><div class="pill mx-auto"></div></footer>
</section>

<section class="phone d-flex flex-column">
 <header class="statusbar bg-white d-flex align-items-center"><span class="clock">10:48</span>
  <svg class="signals ms-auto" viewBox="0 0 141 26"><rect y="16" width="7" height="9" rx="2"/><g class="dim"><rect x="10" y="12" width="7" height="13" rx="2"/><rect x="20" y="7" width="7" height="18" rx="2"/><rect x="30" y="2" width="7" height="23" rx="2"/></g><g fill="none" stroke="#000"><path d="M49 9.500Q63-3.500 77 9.500" stroke-width="5" opacity=".2"/><path d="M54.500 15.500Q63 8 71.500 15.500" stroke-width="5"/></g><path d="M58 20.500Q63 16 68 20.500L63 25.500z"/><use href="#i-bat" x="88" y="0" width="54" height="26"/></svg></header>
 <div class="topbar d-flex align-items-center"><div class="side d-flex align-items-center"><svg viewBox="0 0 26 44"><path d="M23 3 4.500 22 23 41" fill="none" stroke="#3478f6" stroke-width="5.500" stroke-linecap="round" stroke-linejoin="round"/></svg>Tracks</div><h2 class="det flex-fill text-center">TrackDetail</h2><div class="side"></div></div>
 <h1 class="detail-title">Go for hiking</h1>
 <div class="mapbox position-relative"><svg class="tiles" viewBox="-792 -684 2484 1800"><use href="#city"/>
  <g transform="translate(420 557)"><path d="M-70-60Q-35-50 0-62 35-50 70-60 85-30 80 0 70 45 0 66-70 45-80 0-85-30-70-60z" fill="#fff" stroke="#7386b4" stroke-width="5"/><path d="M-66-30H66Q76-14 72 4 60 42 0 57-60 42-72 4-76-14-66-30z" fill="#3a7cf2"/><path d="M-64-51Q-30-43 0-54 30-43 64-51L70-36H-70z" fill="#de6062"/><text text-anchor="middle" y="20" font-family="Noto Sans,sans-serif" font-weight="700" font-size="58" fill="#fff" textLength="100" lengthAdjust="spacingAndGlyphs">280</text></g>
  <g transform="translate(450 219)" fill="none" stroke="#000" stroke-width="6" stroke-linejoin="round"><path d="M-695 5 920 517 10 745M-695-19 890 553 905 537-695 5M0 738 1242-812"/><path d="M14 745 1242-790" stroke-width="8.500"/></g>
  </svg>
  <div class="brand position-absolute d-flex align-items-center"><svg><use href="#i-apple"/></svg>Maps</div><span class="legal position-absolute">Legal</span></div>
 <footer class="tabs mt-auto"><nav class="nav"><a class="nav-link active d-flex flex-column align-items-center"><svg><use href="#i-list"/></svg>Tracks</a><a class="nav-link d-flex flex-column align-items-center"><svg><use href="#i-plus"/></svg>Add Track</a><a class="nav-link d-flex flex-column align-items-center"><svg><use href="#i-gear"/></svg>Account</a></nav><div class="pill mx-auto"></div></footer>
</section>

</main>
<script src="https://cdn.jsdelivr.net/npm/bootstrap@5.3.0/dist/js/bootstrap.bundle.min.js"></script>
</body>
</html>
